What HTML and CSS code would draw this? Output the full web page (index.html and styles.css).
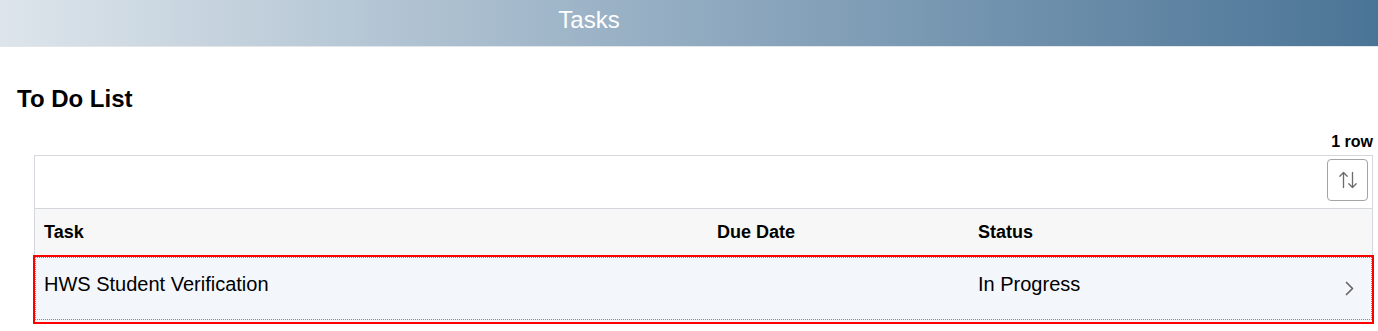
FILE: index.html
```
<!DOCTYPE html>
<html lang="en">
<head>
<meta charset="utf-8">
<title>Tasks</title>
<link rel="stylesheet" href="styles.css">
</head>
<body>
<header class="banner">
  <h1 class="banner-title">Tasks</h1>
</header>
<main class="content">
  <h2 class="page-title">To Do List</h2>
  <div class="row-count">1 row</div>
  <div class="grid">
    <div class="toolbar">
      <button class="sort-btn" type="button" aria-label="Sort">
        <svg width="20" height="20" viewBox="0 0 20 20" fill="none" stroke="#6b6b6b" stroke-width="1.3" stroke-linecap="round" stroke-linejoin="round">
          <path d="M5.5 2.5v15M1.8 6.2 5.5 2.5 9.2 6.2"/>
          <path d="M14.5 2.5v15M10.8 13.8l3.7 3.7 3.7-3.7"/>
        </svg>
      </button>
    </div>
    <div class="head-row">
      <div class="cell">Task</div>
      <div class="cell">Due Date</div>
      <div class="cell">Status</div>
    </div>
    <div class="data-row">
      <a class="data-link" href="#">
        <span class="dcell">HWS Student Verification</span>
        <span class="dcell"></span>
        <span class="dcell">In Progress</span>
        <span class="chev">
          <svg width="9" height="15" viewBox="0 0 9 15" fill="none" stroke="#666" stroke-width="1.7" stroke-linecap="round" stroke-linejoin="round">
            <path d="M1.5 1.5 7.5 7.5 1.5 13.5"/>
          </svg>
        </span>
      </a>
    </div>
  </div>
</main>
</body>
</html>
```

FILE: styles.css
```
* { box-sizing: border-box; }
html, body { margin: 0; padding: 0; }
body {
  font-family: "Liberation Sans", Arial, sans-serif;
  color: #000;
  background: #fff;
}
.banner {
  height: 47px;
  display: flex;
  align-items: center;
  justify-content: center;
  padding: 0 200px 7px 0;
  background: linear-gradient(to right, #dde5eb 0%, #90aac0 51%, #4a7496 100%);
  border-bottom: 1px solid #e4e7ea;
}
.banner-title {
  margin: 0;
  font-size: 24px;
  font-weight: normal;
  color: #fff;
  line-height: 28px;
}
.content {
  padding: 38px 5px 0 17px;
}
.page-title {
  margin: 0;
  font-size: 24px;
  line-height: 28px;
  font-weight: bold;
}
.row-count {
  margin-top: 19px;
  text-align: right;
  font-size: 16px;
  font-weight: bold;
  line-height: 19px;
}
.grid {
  margin: 4px 0 0 17px;
  border: 1px solid #d4d7db;
}
.toolbar {
  display: flex;
  justify-content: flex-end;
  padding: 3px 4px 7px;
  border-bottom: 1px solid #d4d7db;
  background: #fff;
}
.sort-btn {
  width: 41px;
  height: 42px;
  padding: 0;
  border: 1px solid #a4a4a4;
  border-radius: 4px;
  background: #fff;
  display: flex;
  align-items: center;
  justify-content: center;
}
.head-row {
  display: grid;
  grid-template-columns: 673px 261px 1fr;
  height: 46px;
  align-items: center;
  background: #f7f7f7;
}
.cell {
  padding-left: 9px;
  font-size: 18px;
  font-weight: bold;
  line-height: 21px;
}
.data-row {
  margin: 0 -2px -1px;
  height: 69px;
  padding: 2px 2px 4px;
  background: #f3f6fa;
  outline: 2px solid #ff0000;
  outline-offset: -2px;
}
.data-link {
  display: grid;
  grid-template-columns: 672px 262px 1fr 48px;
  align-items: center;
  height: 100%;
  border: 1px dotted #8a8a8a;
  color: #000;
  text-decoration: none;
}
.dcell {
  padding: 0 0 8px 8px;
  font-size: 20px;
  line-height: 23px;
}
.chev {
  display: flex;
  justify-content: center;
  align-items: center;
  padding-left: 4px;
}
```
